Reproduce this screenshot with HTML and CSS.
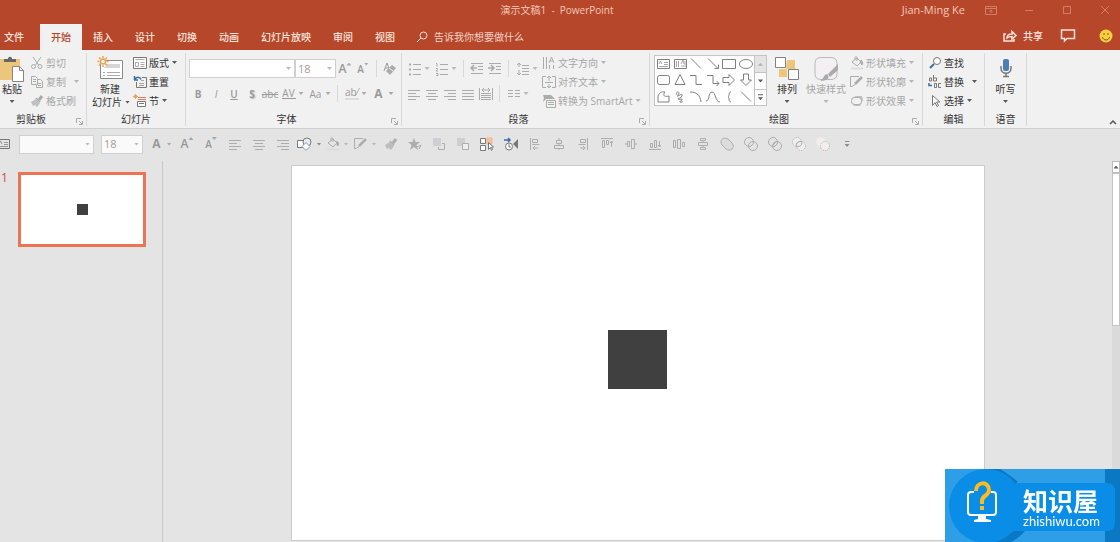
FILE: index.html
```html
<!DOCTYPE html>
<html lang="zh-CN">
<head>
<meta charset="utf-8">
<title>演示文稿1 - PowerPoint</title>
<link rel="stylesheet" href="styles.css">
</head>
<body>
<svg class="sprite" aria-hidden="true">
  <symbol id="cut" viewBox="0 0 14 14"><path d="M3 1l5.500 8M11 1L5.500 9"/><circle cx="3.500" cy="10.500" r="2"/><circle cx="10" cy="10.500" r="2"/></symbol>
  <symbol id="copy" viewBox="0 0 14 14"><path d="M1.500 1.500h4l2 2v6h-6zM7.500 4.500h3l2 2v6h-6v-3M3 4.500h3M3 6.500h3M8 8.500h3M8 10.500h3"/></symbol>
  <symbol id="brush" viewBox="0 0 14 14"><path d="M1 8l5-3 4 4-3 4-2-2-2 1z" fill="currentColor" stroke="none" opacity=".7"/><path d="M6 4l4 4" stroke-width="1.500"/><path d="M9 6l3-4" stroke-width="3"/></symbol>
  <symbol id="layout" viewBox="0 0 14 14"><path d="M.5 1.500h13v11H.500z" fill="#fff"/><path d="M2.500 3.500h9M2.500 6.500h3v4h-3zM7.500 6.500h4M7.500 8.500h4M7.500 10.500h4" opacity=".6"/></symbol>
  <symbol id="reset" viewBox="0 0 14 14"><path d="M3.500 7v5.500h10v-10H9"/><path d="M6 8.500h5M6 10.500h5M8 5.500h3" opacity=".6"/><path d="M1 5h4M1.500 5V1M2 4.500c1-3 5-3 6 0" stroke="#3a6ea5" stroke-width="1.500"/></symbol>
  <symbol id="section" viewBox="0 0 14 14"><path d="M4.500 7.500h8v5h-8zM6 9.500h5" fill="#fff"/><path d="M5 3.500h8M5 5.500h8" stroke="#d97b63"/><path d="M2.500 0v5M0 2.500h5M1 1l3 3M4 1L1 4" stroke="#f0a060"/></symbol>
  <symbol id="launch" viewBox="0 0 7 7"><path d="M.5 5V.500H5M3 3l3 3M6.500 3v3.500H3"/></symbol>
  <symbol id="erase" viewBox="0 0 14 14"><path d="M1 9l3-8 2 5M2 6h4"/><path d="M3 9l6-6 4 3-6 7z" fill="currentColor" stroke="none" opacity=".8"/><path d="M6 6l4 3" stroke="#f1f1f1"/></symbol>
  <symbol id="bullets" viewBox="0 0 14 14"><path d="M5 2.500h8M5 7.500h8M5 12.500h8"/><path d="M1 2.500h2M1 7.500h2M1 12.500h2" stroke-width="2"/></symbol>
  <symbol id="numbers" viewBox="0 0 14 14"><path d="M5 2.500h8M5 7.500h8M5 12.500h8M1 1.500h1v3M1 6.500h1.500v1L1 9h2M1 11.500h2v2H1"/></symbol>
  <symbol id="outdent" viewBox="0 0 14 14"><path d="M1 1.500h12M8 4.500h5M8 7.500h5M1 11.500h12"/><path d="M1 6h6M4 3L1 6l3 3" stroke-width="1.500"/></symbol>
  <symbol id="indent" viewBox="0 0 14 14"><path d="M1 1.500h12M8 4.500h5M8 7.500h5M1 11.500h12"/><path d="M0 6h6M3 3l3 3-3 3" stroke-width="1.500"/></symbol>
  <symbol id="spacing" viewBox="0 0 14 14"><path d="M6 3.500h7M6 6.500h7M6 9.500h7M6 12.500h7M3 1v4M3 8v5M1 3l2-2 2 2M1 11l2 2 2-2"/></symbol>
  <symbol id="left" viewBox="0 0 14 14"><path d="M1 3.500h12M1 6.500h8M1 9.500h12M1 12.500h8"/></symbol>
  <symbol id="center" viewBox="0 0 14 14"><path d="M1 3.500h12M3 6.500h8M1 9.500h12M3 12.500h8"/></symbol>
  <symbol id="right" viewBox="0 0 14 14"><path d="M1 3.500h12M5 6.500h8M1 9.500h12M5 12.500h8"/></symbol>
  <symbol id="justify" viewBox="0 0 14 14"><path d="M1 3.500h12M1 6.500h12M1 9.500h12M1 12.500h12"/></symbol>
  <symbol id="distribute" viewBox="0 0 14 14"><path d="M.5 1v12M13.500 1v12M2 6.500h10M2 8.500h10M2 10.500h10M2 12.500h10M3 3h8M5 1L3 3l2 2M9 1l2 2-2 2"/></symbol>
  <symbol id="columns" viewBox="0 0 14 14"><path d="M1 3.500h5M1 6.500h5M1 9.500h5M8 3.500h5M8 6.500h5M8 9.500h5"/></symbol>
  <symbol id="textdir" viewBox="0 0 14 14"><path d="M1.500 1v12M4.500 1v12M7.500 9v4M11.500 9v4M7 7l2.500-6L12 7M8 5h3"/></symbol>
  <symbol id="aligntext" viewBox="0 0 14 14"><path d="M4 1.500H.500v11H4M10 1.500h3.500v11H10M3 7.500h8M7 1v5M7 9v4M5 3l2-2 2 2M5 11l2 2 2-2"/></symbol>
  <symbol id="smartart" viewBox="0 0 14 14"><path d="M1 1h8l4 4H4l-3 3 1-4z" fill="currentColor" stroke="none"/><path d="M4.500 6.500h9v7h-9z" fill="#f1f1f1"/><path d="M6 8.500h6M6 10.500h6"/></symbol>
  <symbol id="s-text" viewBox="0 0 14 14"><path d="M1.500 2.500h12v9h-12z"/><path d="M3 7l1.500-3L6 7M8 5.500h4M8 7.500h4M3 9.500h9" opacity=".7"/></symbol>
  <symbol id="s-vtext" viewBox="0 0 14 14"><path d="M1.500 2.500h12v9h-12z"/><path d="M3.500 4v6M5.500 4v6M8 7l2-4 1 4M8 9h3M12 4v6" opacity=".7"/></symbol>
  <symbol id="s-line" viewBox="0 0 14 14"><path d="M2 1.500l10 10"/></symbol>
  <symbol id="s-arrow" viewBox="0 0 14 14"><path d="M2 1.500l10 10M12.500 7.500v4h-4"/></symbol>
  <symbol id="s-rect" viewBox="0 0 14 14"><path d="M.5 2.500h13v9H.500z"/></symbol>
  <symbol id="s-oval" viewBox="0 0 14 14"><ellipse cx="7" cy="7" rx="6.500" ry="4.500"/></symbol>
  <symbol id="s-round" viewBox="0 0 14 14"><rect x="1.500" y="2.500" width="12" height="9" rx="2"/></symbol>
  <symbol id="s-tri" viewBox="0 0 14 14"><path d="M7 1.500l5 10H2z"/></symbol>
  <symbol id="s-elbow" viewBox="0 0 14 14"><path d="M1 2.500h6v9h6"/></symbol>
  <symbol id="s-elbowarrow" viewBox="0 0 14 14"><path d="M1 2.500h6v8h6M10.500 8L13 10.500 10.500 13"/></symbol>
  <symbol id="s-right" viewBox="0 0 14 14"><path d="M1 4.500h6v-3L12.500 7 7 12.500v-3H1z"/></symbol>
  <symbol id="s-down" viewBox="0 0 14 14"><path d="M4.500 1h5v6h3L7 12.500 1.500 7h3z"/></symbol>
  <symbol id="s-free" viewBox="0 0 14 14"><path d="M2 12V6c2-5 5-4 7-4-3 4 0 5 4 4v6z"/></symbol>
  <symbol id="s-scribble" viewBox="0 0 14 14"><path d="M4 5c-2-3 2-4 2-2S3 7 5 6s5-3 4 0-5 2-4 3 5-1 4 1-3 1-2 2 3 0 2-1"/></symbol>
  <symbol id="s-arc" viewBox="0 0 14 14"><path d="M1 2c7 0 10 3 11 10"/></symbol>
  <symbol id="s-curve" viewBox="0 0 14 14"><path d="M0 11C4 11 2 2 6 2s3 10 8 10"/></symbol>
  <symbol id="s-brace" viewBox="0 0 14 14"><path d="M9 2C6 2 8 6 6 7c2 1 0 5 3 5"/></symbol>
  <symbol id="fill" viewBox="0 0 14 14"><path d="M2 6l5-4 4 4-4 4zM5 4V1.500c0-1 2-1 2 0V5"/><path d="M11 4c2 2 2 3 1 5l-1-1z" fill="currentColor"/><path d="M1 12.500h12" stroke="#dcdcdc" stroke-width="2"/></symbol>
  <symbol id="outline" viewBox="0 0 14 14"><path d="M9 1.500H.500v10H2l3-2"/><path d="M5 9l7-7" stroke-width="2.500"/></symbol>
  <symbol id="effect" viewBox="0 0 14 14"><path d="M2 8c0-4 2-6 5-6h5l1 4-3 6H4z" fill="currentColor" stroke="none" opacity=".7"/><rect x="1.500" y="3.500" width="10" height="7" rx="3" fill="#f1f1f1"/></symbol>
  <symbol id="find" viewBox="0 0 14 14"><circle cx="9" cy="5" r="3.500" fill="#fff"/><path d="M6 8l-4 4" stroke="#3a6ea5" stroke-width="2"/></symbol>
  <symbol id="select" viewBox="0 0 14 14"><path d="M4.500 1.500v10l2.500-3 2 4 1.500-1-2-3.500H12z" fill="#fff"/></symbol>
  <symbol id="shapes" viewBox="0 0 16 14"><path d="M.5 3.500h8v7h-8z" fill="#fff"/><circle cx="10" cy="5" r="4" fill="#e8edf3"/><path d="M9 5.500l4 4-4 4-4-4z" fill="#fff" stroke="#7d97b2"/></symbol>
  <symbol id="star" viewBox="0 0 14 14"><path d="M6 1l1.500 4H12L8.500 8l1.500 5-4-3-4 3 1.500-5L0 5h4.500z" fill="currentColor" stroke="none"/><path d="M9 10l4-2-2 4"/></symbol>
  <symbol id="front" viewBox="0 0 14 14"><path d="M1 1h8v8H1z" fill="#cfcfd3" stroke="none"/><path d="M10 6.500h2.500v6h-6V10" fill="none"/></symbol>
  <symbol id="back" viewBox="0 0 14 14"><path d="M1 1h8v8H1z" fill="#cfcfd3" stroke="none"/><path d="M6.500 6.500h6v6h-6z" fill="#f3eeee"/></symbol>
  <symbol id="pane" viewBox="0 0 14 14"><path d="M.5 1.500h5v5h-5zM.500 8.500h5v5h-5z" fill="#fff"/><path d="M7 1h5v6H7z" fill="#f4c49b" stroke="#edb58c"/><path d="M8.500 5.500v7l2-2 1 3 1-1-1-2.500h2z" fill="#fff"/></symbol>
  <symbol id="timing" viewBox="0 0 14 14"><path d="M0 3h6M4 1l2 2-2 2" stroke="#3a6ea5" stroke-width="1.500"/><circle cx="5" cy="9.500" r="3.500" fill="#fff"/><path d="M5 7v3h2"/><path d="M14 2v10L9 7z" fill="currentColor" stroke="none"/></symbol>
  <symbol id="al" viewBox="0 0 14 14"><path d="M2.500 1v12M4.500 2.500h5v3h-5zM4.500 7.500h7M5 11h5M7 9l-2 2 2 2"/></symbol>
  <symbol id="ac" viewBox="0 0 14 14"><path d="M4.500 3.500h5v3h-5zM2.500 8.500h9v3h-9zM7 1v2M7 7v1M7 12v1"/></symbol>
  <symbol id="ar" viewBox="0 0 14 14"><path d="M11.500 1v12M4.500 2.500h5v3h-5zM2.500 7.500h7M4 11h5M7 9l2 2-2 2"/></symbol>
  <symbol id="at" viewBox="0 0 14 14"><path d="M1 1.500h12M2.500 3.500h2v7h-2zM6.500 3.500h2v4h-2zM11.500 10V4M10 6l1.500-2L13 6"/></symbol>
  <symbol id="am" viewBox="0 0 14 14"><path d="M3.500 4.500h2v5h-2zM7.500 2.500h3v9h-3zM1 7h2M11 7h2"/></symbol>
  <symbol id="ab" viewBox="0 0 14 14"><path d="M1 12.500h12M2.500 6.500h2v4h-2zM6.500 3.500h2v7h-2zM11.500 4v6M10 8l1.500 2L13 8"/></symbol>
  <symbol id="dh" viewBox="0 0 14 14"><path d="M1.500 3.500h2v7h-2zM5.500 2.500h3v9h-3zM10.500 5.500h2v4h-2z"/></symbol>
  <symbol id="dv" viewBox="0 0 14 14"><path d="M4.500 1.500h5v2h-5zM2.500 5.500h9v3h-9zM4.500 10.500h5v2h-5zM7 4v1M7 9v1"/></symbol>
  <symbol id="union" viewBox="0 0 14 14"><path d="M2 8C-1 4 3-1 8 2l4 4c4 5-2 9-6 6z" fill="#dcdcdc"/></symbol>
  <symbol id="combine" viewBox="0 0 14 14"><circle cx="5" cy="5" r="4.500"/><circle cx="9" cy="9" r="4.500"/></symbol>
  <symbol id="fragment" viewBox="0 0 14 14"><circle cx="5" cy="5" r="4.500"/><circle cx="9" cy="9" r="4.500"/><path d="M5 8l4-4M6 10l4-4"/></symbol>
  <symbol id="intersect" viewBox="0 0 14 14"><g stroke-dasharray="1 1"><circle cx="5" cy="5" r="4.500" fill="#f3eeee"/><circle cx="9" cy="9" r="4.500" fill="#f3eeee"/></g><path d="M4.500 9.500c-1-4 1-5 5-5 1 4-1 5-5 5z"/></symbol>
  <symbol id="subtract" viewBox="0 0 14 14"><circle cx="5" cy="5" r="4.500" fill="#f3eeee" stroke="none"/><circle cx="9" cy="9" r="4.500" fill="#f3eeee" stroke-dasharray="1 1"/></symbol>
</svg>

<header class="chrome">
  <div class="titlebar">
    <h1 class="title">演示文稿1&nbsp; -&nbsp; PowerPoint</h1>
    <div class="window">
      <span class="user">Jian-Ming Ke</span>
      <button aria-label="功能区显示选项"><svg width="12" height="10" viewBox="0 0 12 10"><path d="M.5 1.500h11v8H.500zM1 3.500h10M6 8V5M4.500 6.500L6 5l1.500 1.500"/></svg></button>
      <button aria-label="最小化"><svg width="10" height="10" viewBox="0 0 10 10"><path d="M1 5.500h8"/></svg></button>
      <button aria-label="最大化"><svg width="10" height="10" viewBox="0 0 10 10"><path d="M1.500 1.500h7v7h-7z"/></svg></button>
      <button aria-label="关闭"><svg width="10" height="10" viewBox="0 0 10 10"><path d="M1 1l8 8M9 1L1 9"/></svg></button>
    </div>
  </div>
  <nav class="tabs">
    <button class="tab file">文件</button><button class="tab active">开始</button><button class="tab">插入</button><button class="tab">设计</button><button class="tab">切换</button><button class="tab">动画</button><button class="tab">幻灯片放映</button><button class="tab">审阅</button><button class="tab">视图</button>
    <label class="tell"><svg width="12" height="12" viewBox="0 0 12 12"><circle cx="7.500" cy="4.500" r="3.500"/><path d="M5 7l-4 4"/></svg><input type="text" placeholder="告诉我你想要做什么" aria-label="告诉我你想要做什么"></label>
    <button class="share"><svg width="14" height="12" viewBox="0 0 14 12"><path d="M3 4H1v7h10V9M4 8c0-3 2-4 5-4V1.500l4 4-4 3.500V6.500C6 6.500 5 7 4 8z"/></svg>共享</button>
    <button class="comment" aria-label="批注"><svg width="14" height="13" viewBox="0 0 14 13"><path d="M.5 1h13v8.500H6L3.500 12V9.500h-3z"/></svg></button>
    <button class="smile" aria-label="反馈"><svg width="14" height="14" viewBox="0 0 14 14"><circle cx="7" cy="7" r="6.500" fill="#f9cf3f" stroke="none"/><path d="M5 4v2M9 4v2M3.500 8c1 4 6 4 7 0" stroke="#7c5a12"/></svg></button>
  </nav>
</header>

<section class="ribbon" aria-label="开始">
  <div class="group clipboard">
    <div class="body">
      <button class="big"><svg width="24" height="26" viewBox="0 0 24 26"><path d="M0 3h20v21H0z" fill="#edc57b"/><path d="M4 6V3h4c0-3 4-3 4 0h4v3z" fill="#666"/><path d="M12.500 10.500h7l4 4v11h-11z" fill="#fff" stroke="#858585"/><path d="M19.500 10.500v4h4" fill="none" stroke="#858585"/></svg><span>粘贴</span><i class="caret"></i></button>
      <div class="stack off">
        <button><svg class="i"><use href="#cut"/></svg>剪切</button>
        <button><svg class="i"><use href="#copy"/></svg>复制<i class="caret far"></i></button>
        <button><svg class="i"><use href="#brush"/></svg>格式刷</button>
      </div>
    </div>
    <div class="foot"><span>剪贴板</span><button class="launch" aria-label="剪贴板选项"><svg><use href="#launch"/></svg></button></div>
  </div>

  <div class="group slides">
    <div class="body">
      <button class="big"><svg width="26" height="26" viewBox="0 0 26 26"><path d="M3.500 4.500h22v18h-22z" fill="#fff" stroke="#8a8a8a"/><path d="M10 8h13v4H7z" fill="#d5d5d5"/><path d="M6 16.500h2M10 16.500h13M6 19.500h2M10 19.500h13" stroke="#aaa"/><circle cx="6" cy="5.500" r="2.500" fill="#fff" stroke="#eda453" stroke-width="1.500"/><path d="M6 0v2M6 9v2M.500 5.500h2M9.500 5.500h2M2 1.500l1.500 1.500M10 1.500L8.500 3M2 9.500L3.500 8M10 9.500L8.500 8" stroke="#eda453" stroke-width="1.500"/></svg><span>新建</span><span class="line">幻灯片<i class="caret"></i></span></button>
      <div class="stack">
        <button><svg class="i"><use href="#layout"/></svg>版式<i class="caret"></i></button>
        <button><svg class="i"><use href="#reset"/></svg>重置</button>
        <button><svg class="i"><use href="#section"/></svg>节<i class="caret"></i></button>
      </div>
    </div>
    <div class="foot"><span>幻灯片</span></div>
  </div>

  <div class="group font off">
    <div class="body rows">
      <div class="row">
        <span class="combo name"><select aria-label="字体"><option></option></select><i class="caret"></i></span>
        <span class="combo size"><select aria-label="字号"><option>18</option></select><i class="caret"></i></span>
        <button class="tool grow">A<i class="caret up tip"></i></button><button class="tool shrink">A<i class="caret tip"></i></button><i class="sep"></i><button class="tool" aria-label="清除格式"><svg class="i"><use href="#erase"/></svg></button>
      </div>
      <div class="row">
        <button class="tool"><b>B</b></button><button class="tool"><em>I</em></button><button class="tool under"><u>U</u></button><button class="tool shadow"><b>S</b></button><button class="tool"><s>abc</s></button><button class="tool split"><span class="av">AV</span><i class="caret"></i></button><button class="tool split"><span>Aa</span><i class="caret"></i></button><i class="sep"></i><button class="tool split"><span class="mark">ab⁄</span><i class="caret"></i></button><button class="tool split big-a"><b>A</b><i class="caret"></i></button>
      </div>
    </div>
    <div class="foot"><span>字体</span><button class="launch" aria-label="字体选项"><svg><use href="#launch"/></svg></button></div>
  </div>

  <div class="group para off">
    <div class="body">
      <div class="rows">
        <div class="row">
          <button class="tool split" aria-label="项目符号"><svg class="i"><use href="#bullets"/></svg><i class="caret"></i></button><button class="tool split" aria-label="编号"><svg class="i"><use href="#numbers"/></svg><i class="caret"></i></button><i class="sep"></i><button class="tool" aria-label="减少缩进"><svg class="i"><use href="#outdent"/></svg></button><button class="tool" aria-label="增加缩进"><svg class="i"><use href="#indent"/></svg></button><i class="sep"></i><button class="tool split" aria-label="行距"><svg class="i"><use href="#spacing"/></svg><i class="caret"></i></button>
        </div>
        <div class="row">
          <button class="tool" aria-label="左对齐"><svg class="i"><use href="#left"/></svg></button><button class="tool" aria-label="居中"><svg class="i"><use href="#center"/></svg></button><button class="tool" aria-label="右对齐"><svg class="i"><use href="#right"/></svg></button><button class="tool" aria-label="两端对齐"><svg class="i"><use href="#justify"/></svg></button><button class="tool" aria-label="分散对齐"><svg class="i"><use href="#distribute"/></svg></button><i class="sep"></i><button class="tool split" aria-label="分栏"><svg class="i"><use href="#columns"/></svg><i class="caret"></i></button>
        </div>
      </div>
      <div class="stack">
        <button><svg class="i"><use href="#textdir"/></svg>文字方向<i class="caret"></i></button>
        <button><svg class="i"><use href="#aligntext"/></svg>对齐文本<i class="caret"></i></button>
        <button><svg class="i"><use href="#smartart"/></svg>转换为 SmartArt<i class="caret"></i></button>
      </div>
    </div>
    <div class="foot"><span>段落</span><button class="launch" aria-label="段落选项"><svg><use href="#launch"/></svg></button></div>
  </div>

  <div class="group draw">
    <div class="body">
      <div class="gallery">
        <div class="cells">
          <svg><use href="#s-text"/></svg><svg><use href="#s-vtext"/></svg><svg><use href="#s-line"/></svg><svg><use href="#s-arrow"/></svg><svg><use href="#s-rect"/></svg><svg><use href="#s-oval"/></svg>
          <svg><use href="#s-round"/></svg><svg><use href="#s-tri"/></svg><svg><use href="#s-elbow"/></svg><svg><use href="#s-elbowarrow"/></svg><svg><use href="#s-right"/></svg><svg><use href="#s-down"/></svg>
          <svg><use href="#s-free"/></svg><svg><use href="#s-scribble"/></svg><svg><use href="#s-arc"/></svg><svg><use href="#s-curve"/></svg><svg><use href="#s-brace"/></svg><svg><use href="#s-line"/></svg>
        </div>
        <div class="scroll"><button class="off" aria-label="上一行"><i class="caret up"></i></button><button aria-label="下一行"><i class="caret"></i></button><button aria-label="其他"><i class="caret more"></i></button></div>
      </div>
      <button class="big arrange"><svg width="24" height="26" viewBox="0 0 24 26"><path d="M12 4h8v9H11zM4 13h8v8H4z" fill="#edc57b"/><path d="M.5 1.500h10v10H.500zM13.500 13.500h10v10h-10z" fill="#fff" stroke="#808080"/></svg><span>排列</span><i class="caret"></i></button>
      <button class="big quick off"><svg width="26" height="26" viewBox="0 0 26 26"><path d="M8 1.500h10q6 0 6 6v10q0 6-6 6H8q-6 0-6-6v-10q0-6 6-6z" fill="#f3eff2" stroke="#b9b9b9"/><path d="M25 8v6l-8 7-2-3z" fill="#aaa"/><path d="M14 18c4 4 0 7-7 7 4-2 3-6 7-7z" fill="#aaa"/></svg><span>快速样式</span><i class="caret"></i></button>
      <div class="stack off">
        <button><svg class="i"><use href="#fill"/></svg>形状填充<i class="caret"></i></button>
        <button><svg class="i"><use href="#outline"/></svg>形状轮廓<i class="caret"></i></button>
        <button><svg class="i"><use href="#effect"/></svg>形状效果<i class="caret"></i></button>
      </div>
    </div>
    <div class="foot"><span>绘图</span><button class="launch" aria-label="绘图选项"><svg><use href="#launch"/></svg></button></div>
  </div>

  <div class="group edit">
    <div class="body">
      <div class="stack">
        <button><svg class="i"><use href="#find"/></svg>查找</button>
        <button><svg class="i" viewBox="0 0 14 14"><path d="M1.500 6V3h2v3zM5.500 0v6h3V3h-3M8.500 8.500h-2v4h2zM13 8.500h-2.500v4H13"/><path d="M1 8v2.500h3" stroke="#3a6ea5" stroke-width="1.500"/></svg>替换<i class="caret far"></i></button>
        <button><svg class="i"><use href="#select"/></svg>选择<i class="caret"></i></button>
      </div>
    </div>
    <div class="foot"><span>编辑</span></div>
  </div>

  <div class="group voice">
    <div class="body">
      <button class="big"><svg width="14" height="26" viewBox="0 0 14 26"><rect x="4" y="3" width="6" height="12" rx="2" fill="#4a7fb5"/><path d="M2 10v2c0 7 10 7 10 0v-2M7 17v3M4 20.500h6" fill="none" stroke="#777" stroke-width="1.500"/></svg><span>听写</span><i class="caret"></i></button>
    </div>
    <div class="foot"><span>语音</span></div>
  </div>
  <button class="collapse" aria-label="折叠功能区"><svg width="8" height="6" viewBox="0 0 8 6"><path d="M1 5l3-3 3 3"/></svg></button>
</section>

<section class="quickbar" aria-label="快速访问工具栏">
  <button class="cropped dark" aria-label="文本框"><svg class="i"><use href="#s-text"/></svg></button>
  <span class="combo name"><select aria-label="字体名称"><option></option></select><i class="caret"></i></span>
  <span class="combo size"><select aria-label="字体大小"><option>18</option></select><i class="caret"></i></span>
  <button class="pair letter"><b>A</b><i class="caret"></i></button>
  <button class="grow">A<i class="caret up tip"></i></button>
  <button class="shrink">A<i class="caret tip"></i></button>
  <button aria-label="左对齐文本"><svg class="i"><use href="#left"/></svg></button>
  <button aria-label="居中文本"><svg class="i"><use href="#center"/></svg></button>
  <button aria-label="右对齐文本"><svg class="i"><use href="#right"/></svg></button>
  <button class="pair dark" aria-label="形状"><svg class="i wide"><use href="#shapes"/></svg><i class="caret"></i></button>
  <button class="pair" aria-label="填充"><svg class="i"><use href="#fill"/></svg><i class="caret"></i></button>
  <button class="pair" aria-label="轮廓"><svg class="i"><use href="#outline"/></svg><i class="caret"></i></button>
  <button aria-label="格式刷工具"><svg class="i"><use href="#brush"/></svg></button>
  <button aria-label="动画"><svg class="i"><use href="#star"/></svg></button>
  <button aria-label="上移一层"><svg class="i"><use href="#front"/></svg></button>
  <button aria-label="下移一层"><svg class="i"><use href="#back"/></svg></button>
  <button class="dark" aria-label="选择窗格"><svg class="i"><use href="#pane"/></svg></button>
  <button class="dark" aria-label="动画窗格"><svg class="i"><use href="#timing"/></svg></button>
  <button aria-label="对象左对齐"><svg class="i"><use href="#al"/></svg></button>
  <button aria-label="对象水平居中"><svg class="i"><use href="#ac"/></svg></button>
  <button aria-label="对象右对齐"><svg class="i"><use href="#ar"/></svg></button>
  <button aria-label="顶端对齐"><svg class="i"><use href="#at"/></svg></button>
  <button aria-label="垂直居中"><svg class="i"><use href="#am"/></svg></button>
  <button aria-label="底端对齐"><svg class="i"><use href="#ab"/></svg></button>
  <button aria-label="横向分布"><svg class="i"><use href="#dh"/></svg></button>
  <button aria-label="纵向分布"><svg class="i"><use href="#dv"/></svg></button>
  <button aria-label="结合"><svg class="i"><use href="#union"/></svg></button>
  <button aria-label="组合"><svg class="i"><use href="#combine"/></svg></button>
  <button aria-label="拆分"><svg class="i"><use href="#fragment"/></svg></button>
  <button aria-label="相交"><svg class="i"><use href="#intersect"/></svg></button>
  <button aria-label="剪除"><svg class="i"><use href="#subtract"/></svg></button>
  <button class="dark" aria-label="自定义工具栏"><i class="caret more"></i></button>
</section>

<main class="workspace">
  <aside class="thumbs">
    <span class="num">1</span>
    <button class="thumb" aria-label="幻灯片 1"><span class="mini"></span></button>
  </aside>
  <div class="stage"><div class="slide"><div class="square"></div></div></div>
  <div class="scrollbar"><button aria-label="向上滚动"><i class="caret up"></i></button><div class="grip"></div></div>
</main>

<aside class="brand">
  <svg class="art" viewBox="0 0 175 73"><path d="M0 0h175v73H0z" fill="#2e9ee6"/><path d="M40 0h15q13 8 19 14h86v59H45z" fill="#0a78c3"/><path d="M160 0h15v73h-15z" fill="#0a78c3"/><path d="M75 0h85v14H72zM80 62h80v11H66q8-4 14-11z" fill="#2e9ee6"/><circle cx="41" cy="37" r="37" fill="#0a8de6"/><path d="M60 14h102q8 0 8 8v32q0 8-8 8H60z" fill="#0a8de6"/><path d="M29 23h-3q-3 0-3 3v17q0 3 3 3h22q3 0 3-3V26q0-3-3-3h-2" fill="none" stroke="#fff" stroke-width="2"/><path d="M33 46h8v4l5 1v2H29v-2l4-1z" fill="#fff"/><path d="M31 22c0-10 13-10 13-1 0 6-7 5-7 11v3M37 37v4" fill="none" stroke="#fdbb22" stroke-width="4"/></svg>
  <div class="words"><strong>知识屋</strong><span>zhishiwu.com</span></div>
</aside>
</body>
</html>
```
FILE: styles.css
```css
* { box-sizing: border-box; }

body {
  margin: 0;
  min-height: 100vh;
  display: flex;
  flex-direction: column;
  background: #e4e4e4;
  color: #333;
  font: 10px/12px "Open Sans", "Noto Sans CJK SC", sans-serif;
}

button, select, input {
  font: inherit;
  color: inherit;
  border: 0;
  padding: 0;
  margin: 0;
  background: none;
}

button {
  display: flex;
  align-items: center;
  justify-content: center;
  white-space: nowrap;
}

svg {
  display: block;
  flex: none;
  overflow: visible;
}

.sprite { position: absolute; width: 0; height: 0; }

.i {
  width: 14px;
  height: 14px;
  fill: none;
  stroke: currentColor;
}

.i.wide { width: 16px; }

.caret {
  flex: none;
  width: 5px;
  height: 3px;
  background: currentColor;
  opacity: 0.8;
  clip-path: polygon(0 0, 100% 0, 50% 100%);
}

.caret.up { clip-path: polygon(50% 0, 100% 100%, 0 100%); }
.caret.tip { align-self: flex-start; margin-top: 3px; }
.caret.more {
  height: 6px;
  clip-path: polygon(0 0, 100% 0, 100% 1px, 0 1px, 0 3px, 100% 3px, 50% 100%, 0 3px);
}

.off { color: #a6a6a6; }

/* Title bar and tabs */
.chrome { background: #b7472a; color: #f8e4dd; }

.titlebar {
  display: grid;
  grid-template-columns: 1fr auto 1fr;
  align-items: center;
  height: 24px;
  padding-bottom: 5px;
}

.title {
  grid-column: 2;
  margin: 0;
  padding-right: 6px;
  font-size: 10px;
  font-weight: 400;
  color: #f1c9bc;
}

.window {
  display: flex;
  justify-content: flex-end;
  align-items: center;
  gap: 8px;
}

.window button { width: 30px; color: #cf7f68; }
.window svg, .tabs svg { fill: none; stroke: currentColor; }
.user { margin-right: 3px; color: #f1c9bc; font-size: 11px; }

.tabs { display: flex; height: 26px; }
.tab { padding: 0 11px 1px; font-weight: 500; }
.tab.file { padding: 0 16px 1px 4px; }
.tab.active { background: #f1f1f1; color: #b7472a; }

.tell {
  flex: 1;
  display: flex;
  align-items: center;
  gap: 6px;
  margin-left: 10px;
}

.tell input { flex: 1; min-width: 0; }
.tell input::placeholder { color: #f1d3c9; opacity: 1; }
.share { gap: 6px; font-weight: 500; padding-bottom: 3px; }
.share svg, .comment svg { stroke-width: 1.5; }
.comment { margin-left: 18px; padding-bottom: 3px; }
.smile { margin: 0 7px 0 24px; padding-bottom: 2px; }

/* Ribbon */
.ribbon {
  display: flex;
  background: #f1f1f1;
  border-bottom: 1px solid #d0d0d0;
  padding-top: 3px;
}

.group {
  flex: none;
  display: flex;
  flex-direction: column;
  border-right: 1px solid #d8d8d8;
  margin-bottom: 2px;
}

.body { display: flex; height: 57px; }

.foot {
  display: flex;
  align-items: center;
  height: 16px;
  padding-top: 1px;
  color: #333;
}

.foot span { flex: 1; text-align: center; }
.launch { width: 14px; align-self: flex-end; padding-bottom: 1px; }
.launch svg { width: 7px; height: 7px; fill: none; stroke: #aaa; }

.clipboard { width: 87px; }
.clipboard .foot span { padding-right: 10px; }
.slides { width: 99px; padding-left: 3px; }
.slides .foot { padding-right: 3px; }
.font { width: 216px; }
.font .body { padding-left: 3px; }
.para { width: 248px; }
.para .body { padding-left: 3px; }
.draw { width: 273px; }
.draw .body { padding-left: 4px; }
.edit { width: 62px; }
.edit .body { padding-left: 5px; }
.voice { width: 42px; }
.voice .body { justify-content: center; }

.big {
  flex-direction: column;
  justify-content: flex-start;
  padding-top: 3px;
}

.big .caret { margin-top: 5px; }
.big span { line-height: 12px; padding-top: 1px; }
.big .line { display: flex; align-items: center; gap: 3px; padding-left: 2px; }
.big .line .caret { margin-top: 0; }
.clipboard .big { width: 24px; margin-right: 6px; }
.slides .big { width: 40px; margin-right: 3px; }
.arrange { width: 36px; margin-left: 2px; }
.quick { width: 42px; margin-right: 3px; }

.stack { display: flex; flex-direction: column; }

.stack button {
  height: 19px;
  gap: 2px;
  justify-content: flex-start;
}

.stack .i { color: #777; }
.off .stack .i, .stack.off .i { color: #ababab; }
.stack .caret { margin-left: 1px; }
.stack .caret.far { margin-left: 6px; }

.rows {
  display: flex;
  flex-direction: column;
  gap: 6px;
  padding-top: 6px;
}

.row { display: flex; align-items: center; height: 19px; }
.tool { width: 18px; height: 18px; color: #999; }
.tool.split { width: 27px; gap: 3px; }
.tool.split > :first-child { min-width: 14px; text-align: center; }
.para .rows { width: 137px; }
.para .tool { color: #ababab; }

.sep { flex: none; width: 1px; height: 17px; margin: 0 4px; background: #d8d8d8; }

.shadow { text-shadow: 1px 1px 1px #bbb; }
.under { font-weight: 600; }
.av { border-bottom: 1px solid; line-height: 10px; }
.mark { border-bottom: 2px solid #ddd; line-height: 11px; }
.grow { font-size: 12px; font-weight: 600; }
.shrink { font-size: 10px; font-weight: 600; }
.big-a { font-size: 12px; }

.combo {
  display: grid;
  align-items: center;
  height: 19px;
  background: #fff;
  border: 1px solid #d0d0d0;
  color: #ababab;
}

.combo > * { grid-area: 1 / 1; }
.combo select { appearance: none; width: 100%; padding-left: 2px; font-size: 11px; color: #a59a98; }
.combo .caret { justify-self: end; margin-right: 3px; }
.combo.name { width: 106px; }
.combo.size { width: 41px; }

.gallery {
  display: flex;
  width: 113px;
  height: 51px;
  margin-top: 2px;
  border: 1px solid #c4c4c4;
  background: #fff;
}

.cells {
  flex: 1;
  display: grid;
  grid-template-columns: repeat(6, 1fr);
  grid-template-rows: repeat(3, 1fr);
  place-items: center;
}

.cells svg { width: 14px; height: 14px; fill: none; stroke: #808080; }

.scroll {
  display: grid;
  grid-template-rows: repeat(3, 1fr);
  width: 12px;
  border-left: 1px solid #c4c4c4;
}

.scroll button + button { border-top: 1px solid #c4c4c4; }
.scroll button.off { background: #e4e4e4; }
.collapse { margin: auto 3px 3px auto; }
.collapse svg { fill: none; stroke: #555; stroke-width: 1.5; }

/* Toolbar under the ribbon */
.quickbar {
  display: flex;
  align-items: center;
  height: 32px;
  padding-bottom: 2px;
  color: #adadad;
}

.quickbar button { flex: none; width: 24px; height: 20px; }
.quickbar .dark { color: #777; }
.quickbar .cropped { width: 10px; justify-content: flex-end; }
.quickbar .pair { width: 28px; gap: 4px; }
.quickbar .letter { padding-left: 2px; margin-left: 4px; gap: 6px; }
.quickbar .letter, .quickbar .grow, .quickbar .shrink { color: #999; }
.quickbar .letter { font-size: 12px; }
.quickbar .combo { background: #fafafa; }
.quickbar .combo.name { width: 75px; margin-left: 9px; }
.quickbar .combo.size { width: 42px; margin-left: 7px; }

/* Slides */
.workspace { flex: 1; display: flex; }

.thumbs {
  flex: none;
  display: flex;
  align-items: flex-start;
  width: 163px;
  padding-top: 11px;
  border-right: 1px solid #c8c8c8;
}

.num { width: 18px; padding-left: 1px; font-size: 12px; color: #d0502f; }

.thumb {
  width: 128px;
  height: 75px;
  background: #fff;
  border: 3px solid #ed7452;
}

.mini { width: 11px; height: 11px; background: #404040; }
.stage { flex: 1; display: flex; padding: 4px 127px 1px 128px; }

.slide {
  flex: 1;
  display: flex;
  align-items: center;
  justify-content: center;
  padding: 12px 1px 0 0;
  background: #fff;
  border: 1px solid #cbcbcb;
}

.square { width: 59px; height: 59px; background: #404040; }

.scrollbar { flex: none; width: 8px; background: #dadada; }
.scrollbar button { width: 8px; height: 12px; background: #fff; border: 1px solid #bbb; }
.grip { height: 153px; background: #fff; border: 1px solid #c4c4c4; }

/* Site badge laid over the lower right corner */
.brand { position: fixed; right: 0; bottom: 0; width: 175px; height: 73px; overflow: hidden; }
.art { position: absolute; inset: 0; width: 100%; height: 100%; }

.words {
  position: relative;
  display: flex;
  flex-direction: column;
  padding: 19px 0 0 78px;
  color: #fff;
}

.words strong { font-size: 25px; line-height: 27px; font-weight: 700; }
.words span { font-family: Lato, sans-serif; font-size: 13px; line-height: 12px; }
```
